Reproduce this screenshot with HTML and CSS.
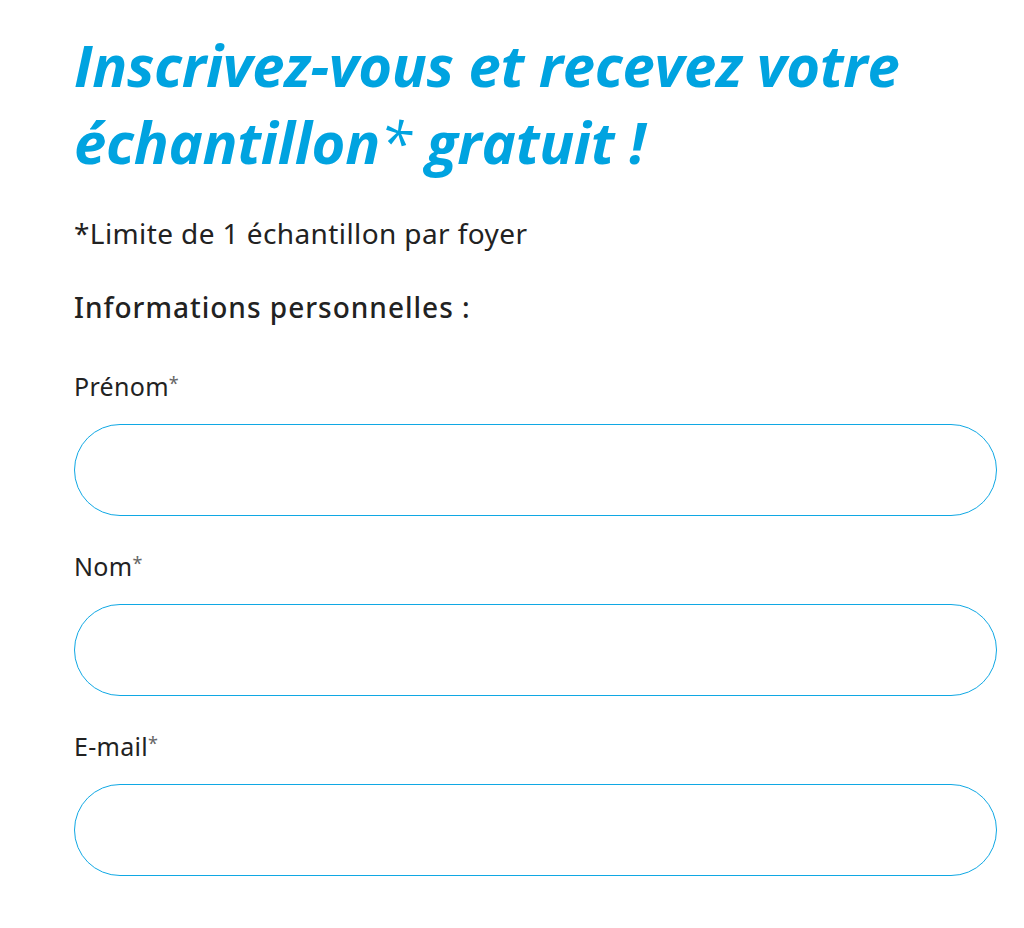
FILE: index.html
```html
<!DOCTYPE html>
<html lang="fr">
<head>
<meta charset="utf-8">
<title>Inscription</title>
<link rel="stylesheet" href="styles.css">
</head>
<body>
<main class="page">
  <h1 class="title">Inscrivez-vous et recevez votre échantillon<span class="title-star">*</span> gratuit !</h1>
  <p class="note">*Limite de 1 échantillon par foyer</p>
  <h2 class="section">Informations personnelles :</h2>
  <form class="form">
    <div class="field">
      <label class="label" for="prenom">Prénom<span class="star">*</span></label>
      <input class="input" id="prenom" type="text">
    </div>
    <div class="field">
      <label class="label" for="nom">Nom<span class="star">*</span></label>
      <input class="input" id="nom" type="text">
    </div>
    <div class="field">
      <label class="label" for="email">E-mail<span class="star">*</span></label>
      <input class="input" id="email" type="email">
    </div>
  </form>
</main>
</body>
</html>
```
FILE: styles.css
```css
html, body {
  margin: 0;
  padding: 0;
  background: #ffffff;
}

.page {
  padding: 26px 27px 0 74px;
  font-family: "Noto Sans", "Open Sans", sans-serif;
  color: #222222;
}

.title {
  margin: 0;
  font-family: "Open Sans", "Lato", sans-serif;
  font-style: italic;
  font-weight: 700;
  font-size: 58px;
  line-height: 77px;
  letter-spacing: -0.3px;
  color: #00a3e0;
}

.title-star {
  font-weight: 400;
}

.note {
  margin: 36px 0 0 0;
  font-size: 28px;
  line-height: 34px;
  letter-spacing: 0.4px;
}

.section {
  margin: 40px 0 0 0;
  font-size: 28px;
  font-weight: 500;
  line-height: 34px;
  letter-spacing: 1px;
}

.form {
  display: flex;
  flex-direction: column;
  gap: 34px;
  margin-top: 46px;
}

.field {
  display: flex;
  flex-direction: column;
  gap: 22px;
}

.label {
  font-size: 25px;
  line-height: 32px;
  height: 32px;
  letter-spacing: 0.3px;
}

.star {
  color: #666666;
  font-size: 18px;
  line-height: 0;
  vertical-align: 6px;
}

.input {
  box-sizing: border-box;
  height: 92px;
  width: 100%;
  border: 1px solid #10a8e4;
  border-radius: 46px;
  background: #ffffff;
  padding: 0 40px;
  font-size: 24px;
  outline: none;
}
```
